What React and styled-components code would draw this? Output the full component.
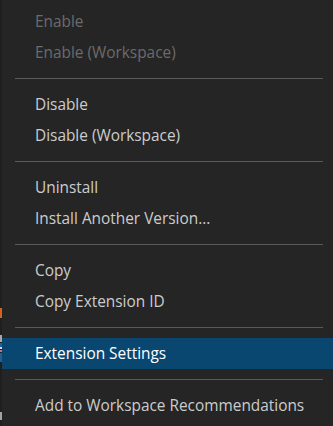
import React from "react";
import styled, { createGlobalStyle } from "styled-components";

const Global = createGlobalStyle`
  html, body { margin: 0; padding: 0; background: #252526; }
  body { width: 333px; height: 426px; overflow: hidden; }
`;

const Page = styled.div`
  display: flex;
  width: 333px;
  height: 426px;
  background: #252526;
`;

const EdgeStrip = styled.svg`
  flex: 0 0 2px;
  width: 2px;
  height: 426px;
  display: block;
`;

const Menu = styled.div`
  flex: 1;
  display: flex;
  flex-direction: column;
  padding-top: 6px;
  font-family: "Segoe UI", "Open Sans", "Noto Sans", sans-serif;
  font-size: 15.4px;
`;

const Item = styled.div`
  height: 31px;
  display: flex;
  align-items: center;
  padding-left: 33px;
  box-sizing: border-box;
  white-space: nowrap;
  color: ${(p) => (p.$disabled ? "#6b6b6b" : p.$active ? "#ffffff" : "#cccccc")};
  background: ${(p) => (p.$active ? "#094771" : "transparent")};
`;

const Separator = styled.div`
  height: 1px;
  margin: 10px 10px 10px 13px;
  background: #5a5a5a;
`;

const groups = [
  [{ label: "Enable", disabled: true }, { label: "Enable (Workspace)", disabled: true }],
  [{ label: "Disable" }, { label: "Disable (Workspace)" }],
  [{ label: "Uninstall" }, { label: "Install Another Version..." }],
  [{ label: "Copy" }, { label: "Copy Extension ID" }],
  [{ label: "Extension Settings", active: true }],
  [{ label: "Add to Workspace Recommendations" }],
];

export default function App() {
  return (
    <>
      <Global />
      <Page>
        <EdgeStrip viewBox="0 0 2 426">
          <rect x="0" y="0" width="2" height="426" fill="#1f1f1f" />
          <rect x="0" y="308" width="2" height="10" fill="#d0661e" />
          <rect x="0" y="335" width="2" height="7" fill="#a8a8a8" />
          <rect x="0" y="343" width="2" height="4" fill="#1f5f9a" />
          <rect x="0" y="347" width="2" height="2" fill="#d8d8e8" />
          <rect x="0" y="350" width="2" height="2" fill="#c47090" />
          <rect x="0" y="353" width="2" height="9" fill="#1f5f9a" />
          <rect x="0" y="412" width="2" height="8" fill="#9aa4b0" />
        </EdgeStrip>
        <Menu>
          {groups.map((g, gi) => (
            <React.Fragment key={gi}>
              {gi > 0 && <Separator />}
              {g.map((it) => (
                <Item key={it.label} $disabled={it.disabled} $active={it.active}>
                  {it.label}
                </Item>
              ))}
            </React.Fragment>
          ))}
        </Menu>
      </Page>
    </>
  );
}
